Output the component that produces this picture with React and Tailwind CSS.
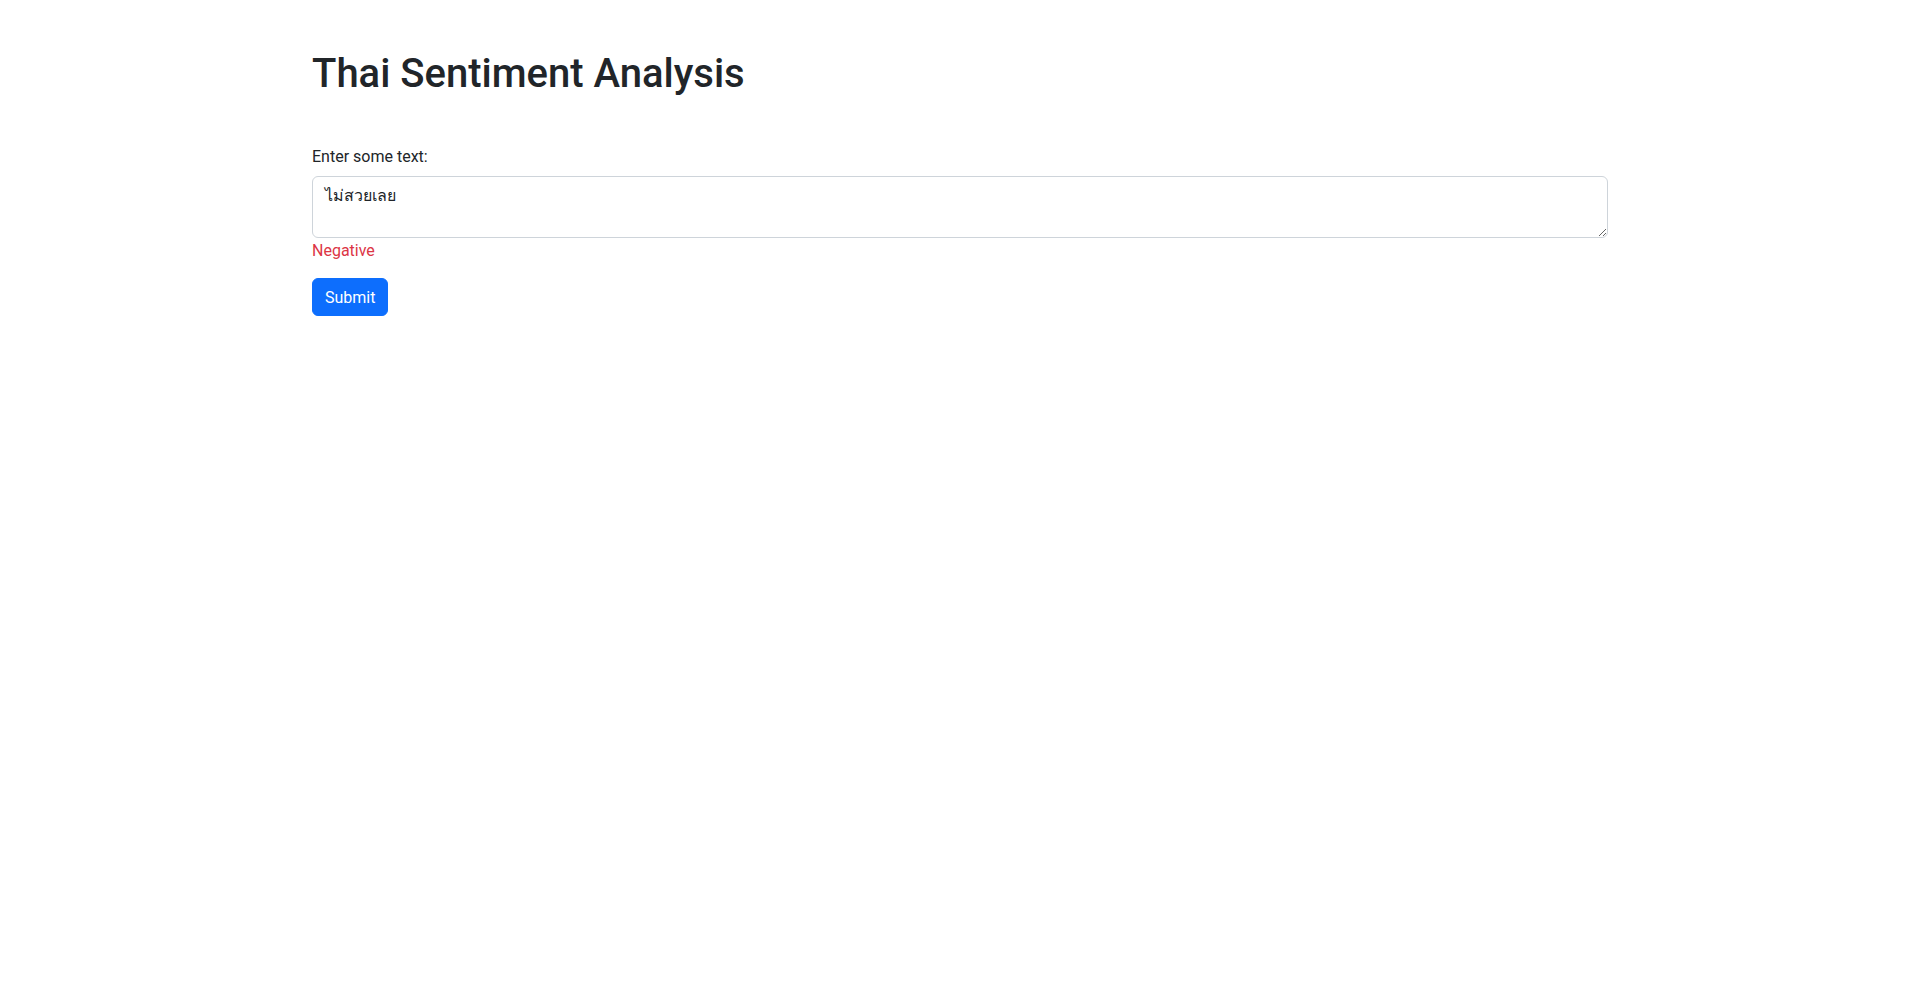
import { useState } from 'react';

export default function App() {
    const [text, setText] = useState('ไม่สวยเลย');

    return (
        <div className="min-h-screen bg-white text-[#212529] font-['Roboto',sans-serif]">
            <div className="mx-auto max-w-[1320px] px-3">
                <h1 className="mt-[50px] mb-[46px] text-[40px] leading-[48px] font-medium">Thai Sentiment Analysis</h1>

                {/* Input form */}
                <label className="mb-[7px] inline-block pt-px text-base leading-6">Enter some text:</label>
                <textarea
                    rows={2}
                    value={text}
                    onChange={(e) => setText(e.target.value)}
                    className="block h-[62px] w-full rounded-md border border-[#ced4da] px-3 pt-[7px] pb-[5px] text-base leading-6 text-[#212529] outline-none"
                />
                <div className="pt-px text-base leading-6 text-[#dc3545]">Negative</div>
                <button className="mt-[15px] rounded-md border border-[#0d6efd] bg-[#0d6efd] px-3 pt-[7px] pb-[5px] text-base leading-6 text-white">
                    Submit
                </button>
            </div>
        </div>
    );
}
